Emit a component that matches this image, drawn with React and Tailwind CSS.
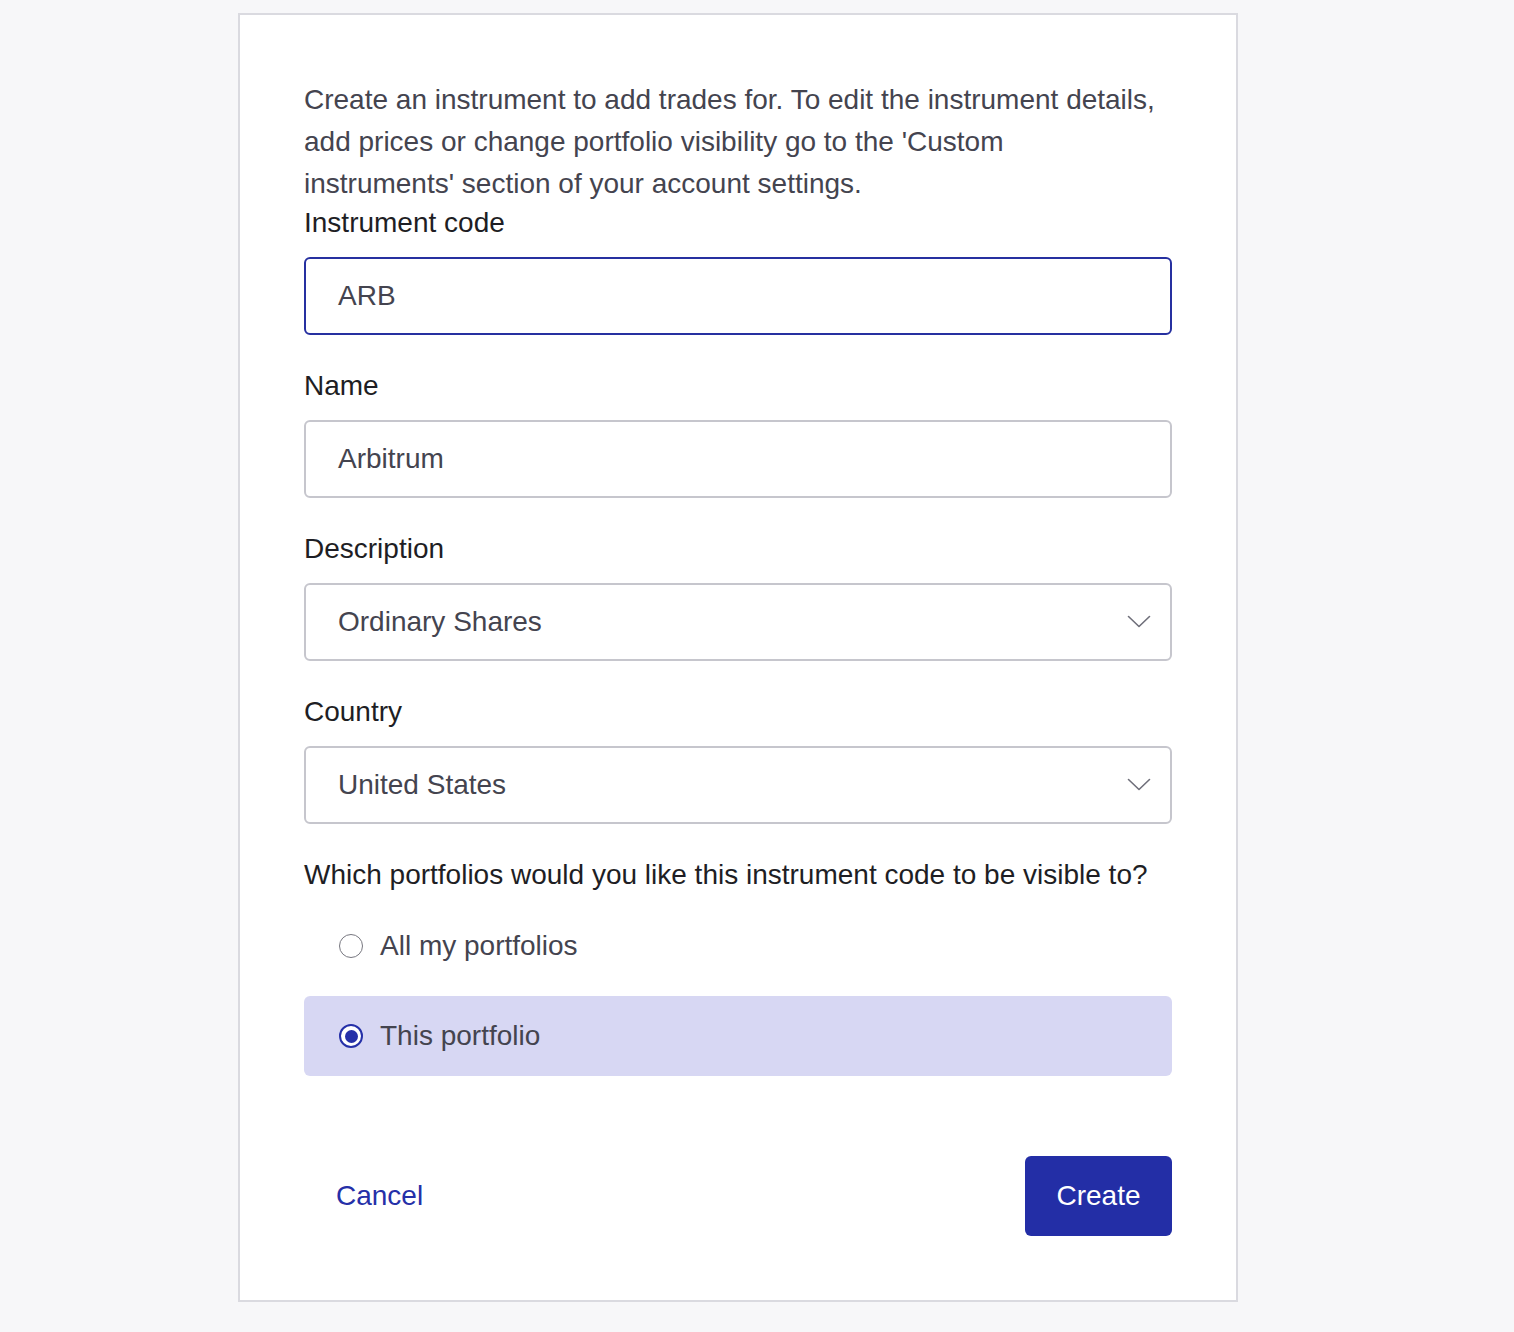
import React, { useState } from 'react';

const font = { fontFamily: '"Liberation Sans", Arial, sans-serif' };

const Chevron = () => (
  <svg width="24" height="14" viewBox="0 0 24 14" fill="none" className="shrink-0">
    <path d="M1.5 1.5 L12 11.5 L22.5 1.5" stroke="#6f6f7a" strokeWidth="1.6" strokeLinecap="round" strokeLinejoin="round" />
  </svg>
);

const Field = ({ label, children }) => (
  <div className="flex flex-col">
    <label className="text-[28px] leading-[36px] text-[#1e1e24] mb-4">{label}</label>
    {children}
    <div className="h-[33px]" />
  </div>
);

const Radio = ({ checked }) => (
  <span
    className={`w-6 h-6 rounded-full flex items-center justify-center shrink-0 ${
      checked ? 'border-[2.5px] border-[#2530a8] bg-white' : 'border-[1.5px] border-[#77777f] bg-white'
    }`}
  >
    {checked && <span className="w-[13px] h-[13px] rounded-full bg-[#2530a8]" />}
  </span>
);

export default function App() {
  const [visibility, setVisibility] = useState('this');

  return (
    <div className="min-h-[1332px] bg-[#f7f7f9] pl-[238px] pt-[13px] pb-[30px]" style={font}>
      <div className="w-[1000px] bg-white border-2 border-[#dadae0] p-16">
        <p className="text-[28px] leading-[42px] text-[#44444f]">
          Create an instrument to add trades for. To edit the instrument details,
          <br />
          add prices or change portfolio visibility go to the 'Custom
          <br />
          instruments' section of your account settings.
        </p>

        <Field label="Instrument code">
          <div className="h-[78px] border-2 border-[#2630a0] rounded-md flex items-center px-8 text-[28px] text-[#44444f]">
            ARB
          </div>
        </Field>

        <Field label="Name">
          <div className="h-[78px] border-2 border-[#c6c6cd] rounded-md flex items-center px-8 text-[28px] text-[#44444f]">
            Arbitrum
          </div>
        </Field>

        <Field label="Description">
          <div className="h-[78px] border-2 border-[#c6c6cd] rounded-md flex items-center justify-between pl-8 pr-[19px] text-[28px] text-[#44444f]">
            <span>Ordinary Shares</span>
            <Chevron />
          </div>
        </Field>

        <Field label="Country">
          <div className="h-[78px] border-2 border-[#c6c6cd] rounded-md flex items-center justify-between pl-8 pr-[19px] text-[28px] text-[#44444f]">
            <span>United States</span>
            <Chevron />
          </div>
        </Field>

        <p className="text-[28px] leading-[36px] text-[#1e1e24]">
          Which portfolios would you like this instrument code to be visible to?
        </p>

        <div className="flex flex-col gap-[10px] mt-[13px]">
          <button
            onClick={() => setVisibility('all')}
            className={`h-20 rounded-md flex items-center gap-[17px] px-[35px] text-[28px] text-[#44444f] text-left ${
              visibility === 'all' ? 'bg-[#d7d7f3]' : ''
            }`}
          >
            <Radio checked={visibility === 'all'} />
            All my portfolios
          </button>
          <button
            onClick={() => setVisibility('this')}
            className={`h-20 rounded-md flex items-center gap-[17px] px-[35px] text-[28px] text-[#44444f] text-left ${
              visibility === 'this' ? 'bg-[#d7d7f3]' : ''
            }`}
          >
            <Radio checked={visibility === 'this'} />
            This portfolio
          </button>
        </div>

        <div className="flex items-center justify-between mt-20">
          <button className="h-20 px-8 text-[28px] text-[#2530a8]">Cancel</button>
          <button className="h-20 w-[147px] rounded-md bg-[#232ea6] text-white text-[28px]">Create</button>
        </div>
      </div>
    </div>
  );
}
